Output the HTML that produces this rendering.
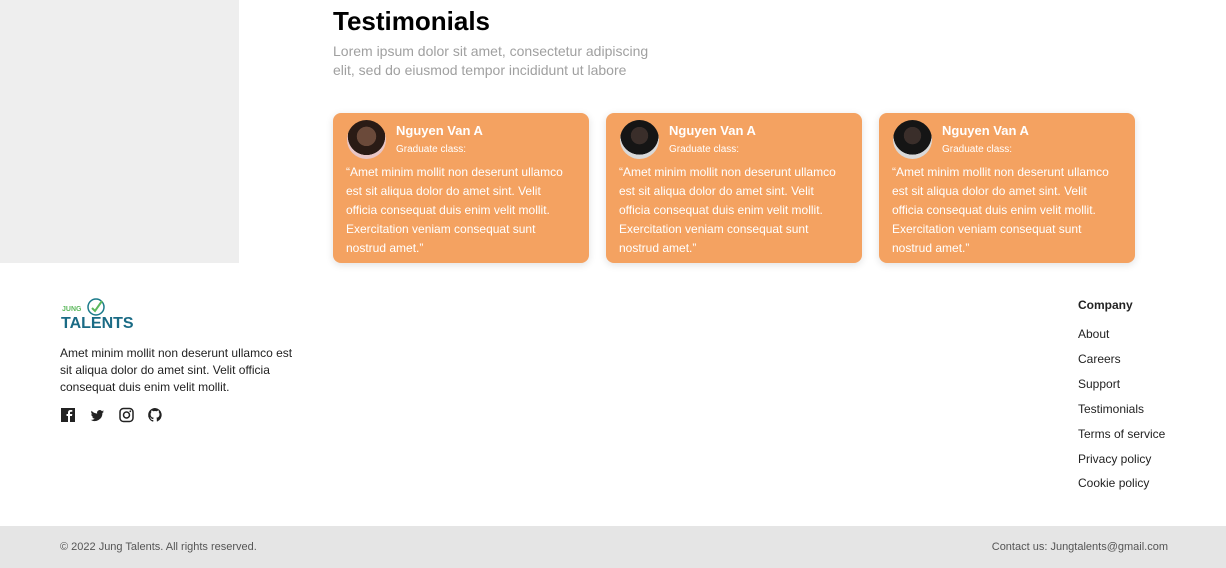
<!DOCTYPE html>
<html><head><meta charset="utf-8"><style>
*{margin:0;padding:0;box-sizing:border-box}
body{width:1226px;height:568px;position:relative;background:#fff;font-family:"Liberation Sans",sans-serif;overflow:hidden}
.abs{position:absolute}
.card{position:absolute;top:113px;width:256px;height:150px;background:#F4A261;border-radius:8px;box-shadow:0 2px 8px rgba(0,0,0,.12);color:#fff}
.av{position:absolute;left:14px;top:7px;width:39px;height:39px;border-radius:50%;background:radial-gradient(circle at 50% 42%,#6b4a3a 0 32%,#2a1b15 33% 62%,#e8c6c6 63%)}
.av.m{background:radial-gradient(circle at 50% 40%,#3a2e2a 0 28%,#151515 29% 62%,#d9d9d9 63%)}
.nm{position:absolute;left:63px;top:10px;font-weight:bold;font-size:13px}
.gc{position:absolute;left:63px;top:31px;font-size:10px}
.tx{position:absolute;left:13px;top:50px;width:226px;font-size:12px;line-height:19px}
.lk{position:absolute;left:1078px;font-size:12px;color:#222}
</style></head><body>
<div class="abs" style="left:0;top:0;width:239px;height:263px;background:#eeeeee"></div>
<div class="abs" style="left:333px;top:6px;font-size:26px;font-weight:bold;color:#000">Testimonials</div>
<div class="abs" style="left:333px;top:42px;width:340px;font-size:14px;line-height:19px;color:#a0a0a0">Lorem ipsum dolor sit amet, consectetur adipiscing elit, sed do eiusmod tempor incididunt ut labore</div>
<div class="card" style="left:333px"><div class="av"></div><div class="nm">Nguyen Van A</div><div class="gc">Graduate class:</div><div class="tx">“Amet minim mollit non deserunt ullamco est sit aliqua dolor do amet sint. Velit officia consequat duis enim velit mollit. Exercitation veniam consequat sunt nostrud amet.”</div></div>
<div class="card" style="left:606px"><div class="av m"></div><div class="nm">Nguyen Van A</div><div class="gc">Graduate class:</div><div class="tx">“Amet minim mollit non deserunt ullamco est sit aliqua dolor do amet sint. Velit officia consequat duis enim velit mollit. Exercitation veniam consequat sunt nostrud amet.”</div></div>
<div class="card" style="left:879px"><div class="av m"></div><div class="nm">Nguyen Van A</div><div class="gc">Graduate class:</div><div class="tx">“Amet minim mollit non deserunt ullamco est sit aliqua dolor do amet sint. Velit officia consequat duis enim velit mollit. Exercitation veniam consequat sunt nostrud amet.”</div></div>
<div class="abs" style="left:62px;top:306px;font-size:7px;font-weight:bold;color:#5cb85c">JUNG</div>
<svg class="abs" style="left:86px;top:297px" width="22" height="22"><circle cx="10" cy="10" r="8" fill="none" stroke="#1a7a8a" stroke-width="1.5"/><path d="M6 11l3 3 7-10" stroke="#5cb85c" stroke-width="2" fill="none"/></svg>
<div class="abs" style="left:61px;top:315px;font-size:16px;font-weight:bold;color:#1a6b85">TALENTS</div>
<div class="abs" style="left:60px;top:345px;width:240px;font-size:12px;line-height:17px;color:#222">Amet minim mollit non deserunt ullamco est sit aliqua dolor do amet sint. Velit officia consequat duis enim velit mollit.</div>
<svg class="abs" style="left:60px;top:407px" width="110" height="16">
<rect x="1" y="1" width="14" height="14" fill="#222"/><path d="M10 15V9h2l.3-2H10V5.8c0-.6.2-1 1-1h1.3V3H10.5C8.8 3 8 4 8 5.5V7H6.5v2H8v6z" fill="#fff"/>
<path d="M44 4.5c-.5.2-1 .4-1.6.4.6-.3 1-.9 1.2-1.5-.5.3-1.1.5-1.7.7a2.7 2.7 0 0 0-4.7 2.5C34.9 6.5 32.9 5.4 31.6 3.8c-.8 1.3-.3 2.8.8 3.6-.4 0-.8-.1-1.2-.3 0 1.3.9 2.4 2.2 2.7-.4.1-.8.1-1.2 0 .3 1.1 1.4 1.9 2.5 1.9A5.5 5.5 0 0 1 30.5 12.8 7.7 7.7 0 0 0 42.4 6c.6-.4 1.1-.9 1.6-1.5z" fill="#222"/>
<rect x="60" y="1.5" width="13" height="13" rx="3.5" fill="none" stroke="#222" stroke-width="1.5"/><circle cx="66.5" cy="8" r="3" fill="none" stroke="#222" stroke-width="1.5"/><circle cx="70.3" cy="4.3" r=".9" fill="#222"/>
<path d="M95 1a7 7 0 0 0-2.2 13.6c.4 0 .5-.2.5-.4v-1.3c-2 .4-2.4-.9-2.4-.9-.3-.8-.8-1-.8-1-.6-.5.1-.5.1-.5.7 0 1.1.7 1.1.7.6 1.1 1.7.8 2.1.6 0-.5.2-.8.4-1-1.6-.2-3.2-.8-3.2-3.5 0-.8.3-1.4.7-1.9 0-.2-.3-.9.1-1.9 0 0 .6-.2 1.9.7a6.6 6.6 0 0 1 3.5 0c1.3-.9 1.9-.7 1.9-.7.4 1 .1 1.7.1 1.9.4.5.7 1.1.7 1.9 0 2.7-1.6 3.3-3.2 3.5.3.2.5.7.5 1.3v2c0 .2.1.4.5.4A7 7 0 0 0 95 1z" fill="#222"/>
</svg>
<div class="abs" style="left:1078px;top:298px;font-size:12px;font-weight:bold;color:#222">Company</div>
<div class="lk" style="top:327px">About</div>
<div class="lk" style="top:352px">Careers</div>
<div class="lk" style="top:377px">Support</div>
<div class="lk" style="top:402px">Testimonials</div>
<div class="lk" style="top:427px">Terms of service</div>
<div class="lk" style="top:452px">Privacy policy</div>
<div class="lk" style="top:476px">Cookie policy</div>
<div class="abs" style="left:0;top:526px;width:1226px;height:42px;background:#e5e5e5"></div>
<div class="abs" style="left:60px;top:541px;font-size:11px;color:#555">© 2022 Jung Talents. All rights reserved.</div>
<div class="abs" style="right:58px;top:541px;font-size:11px;color:#555">Contact us: Jungtalents@gmail.com</div>
</body></html>
